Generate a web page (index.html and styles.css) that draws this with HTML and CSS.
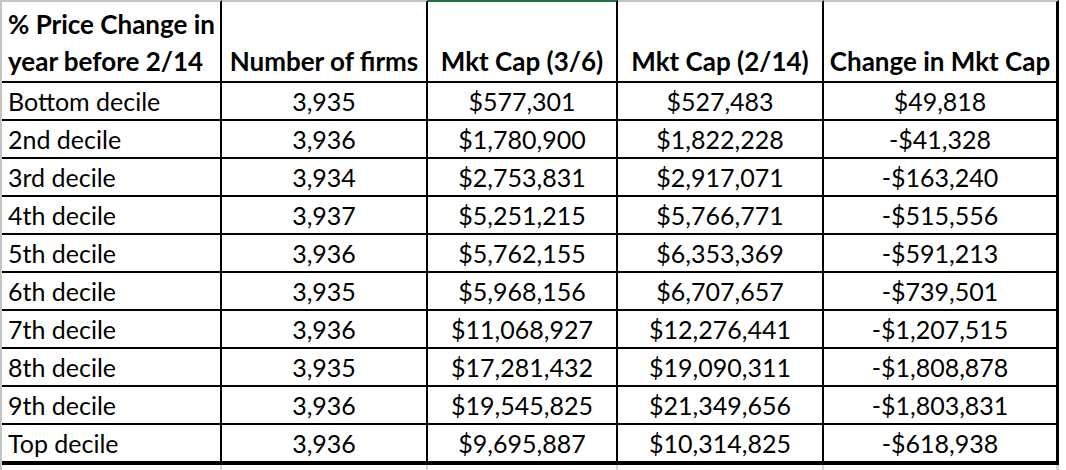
FILE: index.html
```html
<!DOCTYPE html>
<html>
<head>
<meta charset="utf-8">
<link rel="stylesheet" href="styles.css">
</head>
<body>
<div class="sheet">
<table class="grid">
  <colgroup>
    <col class="c1"><col class="c2"><col class="c3"><col class="c4"><col class="c5">
  </colgroup>
  <thead>
    <tr class="head">
      <th class="label">% Price Change in<br>year before 2/14</th>
      <th>Number of firms</th>
      <th class="sel">Mkt Cap (3/6)</th>
      <th>Mkt Cap (2/14)</th>
      <th class="last">Change in Mkt Cap</th>
    </tr>
  </thead>
  <tbody>
    <tr><td class="label">Bottom decile</td><td>3,935</td><td>$577,301</td><td>$527,483</td><td class="last">$49,818</td></tr>
    <tr><td class="label">2nd decile</td><td>3,936</td><td>$1,780,900</td><td>$1,822,228</td><td class="last">-$41,328</td></tr>
    <tr><td class="label">3rd decile</td><td>3,934</td><td>$2,753,831</td><td>$2,917,071</td><td class="last">-$163,240</td></tr>
    <tr><td class="label">4th decile</td><td>3,937</td><td>$5,251,215</td><td>$5,766,771</td><td class="last">-$515,556</td></tr>
    <tr><td class="label">5th decile</td><td>3,936</td><td>$5,762,155</td><td>$6,353,369</td><td class="last">-$591,213</td></tr>
    <tr><td class="label">6th decile</td><td>3,935</td><td>$5,968,156</td><td>$6,707,657</td><td class="last">-$739,501</td></tr>
    <tr><td class="label">7th decile</td><td>3,936</td><td>$11,068,927</td><td>$12,276,441</td><td class="last">-$1,207,515</td></tr>
    <tr><td class="label">8th decile</td><td>3,935</td><td>$17,281,432</td><td>$19,090,311</td><td class="last">-$1,808,878</td></tr>
    <tr><td class="label">9th decile</td><td>3,936</td><td>$19,545,825</td><td>$21,349,656</td><td class="last">-$1,803,831</td></tr>
    <tr class="final"><td class="label">Top decile</td><td>3,936</td><td>$9,695,887</td><td>$10,314,825</td><td class="last">-$618,938</td></tr>
    <tr class="stub"><td></td><td></td><td></td><td></td><td class="last"></td></tr>
  </tbody>
</table>
</div>
</body>
</html>
```

FILE: styles.css
```css
html, body {
  margin: 0;
  padding: 0;
  background: #ffffff;
}

.sheet {
  width: 1066px;
  height: 470px;
  overflow: hidden;
  border-left: 2px solid #c4c4c4;
  box-sizing: border-box;
  font-family: "Lato", "Liberation Sans", sans-serif;
  color: #000;
}

.grid {
  border-collapse: separate;
  border-spacing: 0;
  table-layout: fixed;
  width: 1057px;
}

.c1 { width: 220px; }
.c2 { width: 206px; }
.c3 { width: 190px; }
.c4 { width: 206px; }
.c5 { width: 235px; }

.grid th,
.grid td {
  padding: 0;
  border-right: 2px solid #000;
  border-bottom: 2px solid #000;
  text-align: center;
  vertical-align: bottom;
  white-space: nowrap;
  overflow: hidden;
  font-variant-numeric: tabular-nums;
}

.grid th {
  height: 78px;
  border-top: 2px solid #c4c4c4;
  font-weight: 700;
  font-size: 26px;
  line-height: 37px;
  padding-bottom: 1px;
}

.grid th.sel {
  border-top-color: #1e7145;
}

.grid td {
  height: 36px;
  line-height: 36px;
  font-weight: 400;
  font-size: 25px;
}

.grid .label {
  text-align: left;
  padding-left: 6px;
}

.grid .last {
  border-right-width: 3px;
}

.grid tr.final td {
  border-bottom-width: 4px;
}

.grid tr.stub td {
  height: 8px;
  line-height: 8px;
  border-bottom: 0;
  border-right-color: #d6d6d6;
}
```
